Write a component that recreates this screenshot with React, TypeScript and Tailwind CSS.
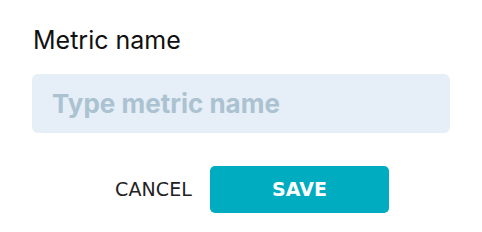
export default function App() {
  return (
    <div className="w-[482px] h-[232px] bg-white" style={{ fontFamily: "Inter, 'Noto Sans', sans-serif" }}>
      <div className="pl-[32px] pr-[32px] pt-[24px]">
        <div className="text-[25px] leading-[32px] text-[#111] pl-[1px]">Metric name</div>
        <div className="mt-[18px] h-[59px] rounded-[6px] bg-[#e6eff7] flex items-center pl-[20px]">
          <span className="text-[26px] font-bold text-[#abc2d1]">Type metric name</span>
        </div>
        <div className="mt-[33px] flex items-center">
          <div className="w-[178px] flex justify-end pr-[18px] text-[19px] text-[#222] tracking-[0.1px]" style={{ fontFamily: "'DejaVu Sans', Verdana, sans-serif" }}>CANCEL</div>
          <div className="w-[179px] h-[47px] rounded-[5px] bg-[#00acbf] flex items-center justify-center text-white font-bold text-[19px]" style={{ fontFamily: "'DejaVu Sans', Verdana, sans-serif" }}>SAVE</div>
        </div>
      </div>
    </div>
  );
}
